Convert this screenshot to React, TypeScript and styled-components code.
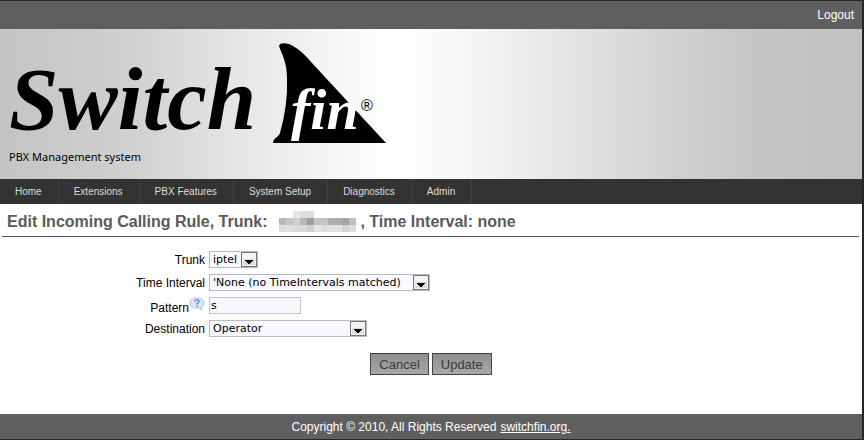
import React from 'react';
import styled, { createGlobalStyle } from 'styled-components';

const Global = createGlobalStyle`
  *, *::before, *::after { box-sizing: border-box; }
  body { margin: 0; background: #fff; font-family: "Liberation Sans", Arial, sans-serif; font-size: 12px; color: #000; }
`;

const Page = styled.div`
  display: flex;
  flex-direction: column;
  min-height: 100vh;
  border: solid #262626;
  border-width: 1px 2px 1px 0;
`;

const TopBar = styled.div`
  display: flex;
  justify-content: flex-end;
  align-items: center;
  height: 28px;
  padding: 0 8px;
  background: #5f5f5f;
`;

const BarLink = styled.a<{ $underline?: boolean }>`
  color: #fff;
  text-decoration: ${p => (p.$underline ? 'underline' : 'none')};
`;

const Banner = styled.header`
  display: flex;
  flex-direction: column;
  height: 150px;
  padding: 8px 9px;
  background: linear-gradient(90deg, #c4c4c4 0%, #d0d0d0 15%, #e6e6e6 28%, #f8f8f8 40%, #fff 46%, #f7f7f7 54%, #e4e4e4 66%, #d2d2d2 78%, #c5c5c5 88%, #c2c2c2 100%);
`;

const Logo = styled.svg`
  display: block;
  flex: none;
  overflow: visible;
`;

const Tagline = styled.div`
  font: 11px/16px "Noto Sans", sans-serif;
`;

const Nav = styled.nav`
  display: flex;
  height: 25px;
  background: #333;
`;

const NavLink = styled.a`
  display: flex;
  align-items: center;
  padding: 0 16px 0 15px;
  border-right: 1px solid #424242;
  color: #ddd;
  font-size: 10px;
  text-decoration: none;
`;

const Title = styled.h1`
  display: flex;
  align-items: center;
  height: 33px;
  margin: 0 3px 0 2px;
  padding: 3px 5px 0;
  border-bottom: 1px solid #5a5a5a;
  color: #5a5a5a;
  font-size: 16px;
  white-space: pre;
`;

const Mosaic = styled.svg`
  display: block;
  margin: 0 4px 0 12px;
`;

const Form = styled.form`
  flex: 1;
  padding: 14px 0 16px;
`;

const Row = styled.div`
  display: grid;
  grid-template-columns: 205px 1fr;
  column-gap: 4px;
  height: 17px;
  margin-bottom: 6px;
`;

const LabelCell = styled.div`
  display: flex;
  justify-content: flex-end;
  align-items: center;
`;

const LowLabel = styled.label`
  align-self: flex-end;
  line-height: 12px;
`;

const HelpIcon = styled.svg`
  display: block;
  flex: none;
  align-self: flex-start;
`;

const SelectBox = styled.div<{ $width: number }>`
  position: relative;
  width: ${p => p.$width}px;
  height: 17px;
`;

const Select = styled.select`
  appearance: none;
  display: block;
  width: 100%;
  height: 17px;
  margin: 0;
  padding: 0 18px 0 3px;
  border: 1px solid #bbb;
  border-radius: 0;
  background: #f8f8ff;
  color: #000;
  font: 11px/15px "DejaVu Sans", sans-serif;
`;

const Arrow = styled.svg`
  position: absolute;
  top: 0;
  right: 0;
  pointer-events: none;
`;

const TextInput = styled.input`
  width: 92px;
  height: 17px;
  padding: 0 1px;
  border: 1px solid #c4c4c4;
  background: #f8f8ff;
  color: #000;
  font: 11px/15px "DejaVu Sans", sans-serif;
`;

const Actions = styled.div`
  display: flex;
  justify-content: center;
  gap: 3px;
  margin-top: 16px;
`;

const Button = styled.button`
  height: 22px;
  padding: 0 8px;
  border: 1px solid #444;
  border-radius: 0;
  background: linear-gradient(#8f8f8f, #a8a8a8);
  color: #3a3a3a;
  font: 13px "Liberation Sans", Arial, sans-serif;
`;

const Footer = styled.footer`
  display: flex;
  justify-content: center;
  align-items: center;
  gap: 4px;
  height: 25px;
  background: #5f5f5f;
  color: #fff;
`;

const menu = ['Home', 'Extensions', 'PBX Features', 'System Setup', 'Diagnostics', 'Admin'];

const tones = [
  ['#fff', '#fff', '#e6e6e4', '#dededc', '#dededc', '#fff', '#fff', '#fff', '#fff', '#fff', '#fff'],
  ['#b9b9b9', '#c6c6c6', '#cfcfcd', '#b4b8ba', '#a09e9b', '#c4c4c2', '#c4c4c2', '#b0aeab', '#b0aeab', '#a3a3a1', '#bcc0c2'],
  ['#deded8', '#e0e0dc', '#d6dad8', '#d6dad8', '#d0d0ce', '#e2e2e0', '#dcdcd4', '#e0e0de', '#e2e2e0', '#d4d4cc', '#dededc'],
];

function DropDown({ id, value, width }: { id: string; value: string; width: number }) {
  return (
    <SelectBox $width={width}>
      <Select id={id} defaultValue={value}>
        <option>{value}</option>
      </Select>
      <Arrow width="18" height="17" viewBox="0 0 18 17" aria-hidden="true">
        <rect x="1.5" y="1.5" width="15" height="14" fill="#f4f4f4" stroke="#777" />
        <rect x="3" y="8" width="12" height="6" fill="#dcdcdc" />
        <path d="M5 9h8v1h-1v1h-1v1h-1v1H8v-1H7v-1H6v-1H5z" fill="#000" />
      </Arrow>
    </SelectBox>
  );
}

export default function App() {
  return (
    <>
      <Global />
      <Page>
        <TopBar><BarLink href="#logout">Logout</BarLink></TopBar>
        <Banner>
          <Logo width="380" height="112" viewBox="9 37 380 112" role="img" aria-label="Switchfin">
            <text x="9" y="129" fontFamily="Liberation Serif, serif" fontSize="89" fontWeight="700" fontStyle="italic">Switch</text>
            <path d="M279 46C280 42 288 43 293 46Q302 51 312 63L386 143H273C273 138 278 138 280 133Q288 105 287 78C287 62 282 55 279 46Z" />
            <text x="291" y="129" fill="#fff" fontFamily="Liberation Serif, serif" fontSize="58" fontWeight="700" fontStyle="italic">fin</text>
            <text x="361" y="111" fontFamily="Liberation Sans, sans-serif" fontSize="16">®</text>
          </Logo>
          <Tagline>PBX Management system</Tagline>
        </Banner>
        <Nav>
          {menu.map(item => <NavLink key={item} href="#">{item}</NavLink>)}
        </Nav>
        <Title>
          Edit Incoming Calling Rule, Trunk:
          <Mosaic width="77" height="21" viewBox="0 0 77 21" shapeRendering="crispEdges" aria-hidden="true">
            {tones.map((line, y) => line.map((fill, x) => (
              <rect key={`${x}-${y}`} x={x * 7} y={y * 7} width="7" height="7" fill={fill} />
            )))}
          </Mosaic>
          , Time Interval: none
        </Title>
        <Form onSubmit={e => e.preventDefault()}>
          <Row>
            <LabelCell><label htmlFor="trunk">Trunk</label></LabelCell>
            <DropDown id="trunk" value="iptel" width={49} />
          </Row>
          <Row>
            <LabelCell><label htmlFor="interval">Time Interval</label></LabelCell>
            <DropDown id="interval" value="'None (no TimeIntervals matched)" width={221} />
          </Row>
          <Row>
            <LabelCell>
              <LowLabel htmlFor="pattern">Pattern</LowLabel>
              <HelpIcon width="16" height="14" viewBox="0 0 16 14" aria-hidden="true">
                <path d="M8 1C3 1 1 3 1 6s2 5 6 5h3l3 2-1-3q3-1 3-4c0-3-2-5-7-5z" fill="#dce6f2" stroke="#b9c5d3" />
                <path d="M6 4.500Q6 3 8 3t2 1.500T8 6.500v1M8 8.500v1.500" fill="none" stroke="#5b9be0" strokeWidth="1.500" />
              </HelpIcon>
            </LabelCell>
            <TextInput id="pattern" defaultValue="s" />
          </Row>
          <Row>
            <LabelCell><label htmlFor="destination">Destination</label></LabelCell>
            <DropDown id="destination" value="Operator" width={158} />
          </Row>
          <Actions>
            <Button type="button">Cancel</Button>
            <Button type="submit">Update</Button>
          </Actions>
        </Form>
        <Footer>
          <span>Copyright © 2010, All Rights Reserved</span>
          <BarLink href="#switchfin" $underline>switchfin.org.</BarLink>
        </Footer>
      </Page>
    </>
  );
}
